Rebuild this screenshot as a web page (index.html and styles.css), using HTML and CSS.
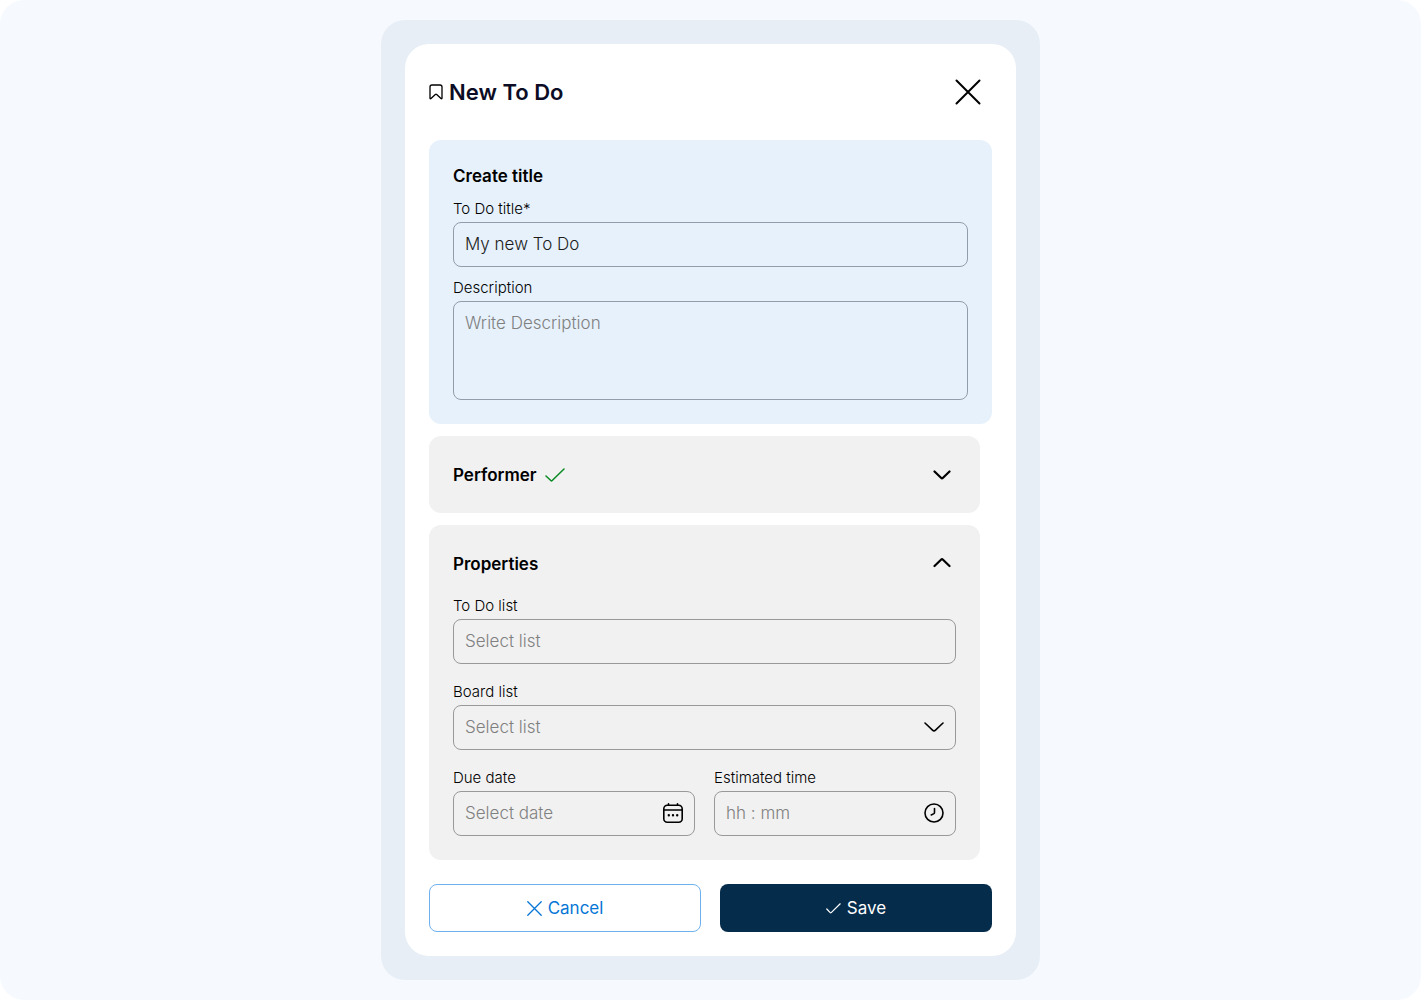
FILE: index.html
```
<!DOCTYPE html>
<html lang="en">
<head>
    <meta charset="UTF-8">
    <meta name="viewport" content="width=device-width, initial-scale=1.0">
    <title>New To Do</title>
    <link rel="stylesheet" href="styles.css">
</head>
<body>
    <div class="page">
        <div class="frame">
            <form class="modal">
                <div class="modal-header">
                    <svg width="14" height="16" viewBox="0 0 14 16" fill="none" stroke="#000" stroke-width="1.3" stroke-linejoin="round">
                        <path d="M3 1h8a2 2 0 0 1 2 2v11.2c0 .5-.6.8-1 .4L7.700 10.600a1 1 0 0 0-1.400 0L2 14.600c-.4.4-1 .1-1-.4V3a2 2 0 0 1 2-2z"/>
                    </svg>
                    <h1>New To Do</h1>
                    <button type="button" class="close-button" aria-label="Close">
                        <svg width="26" height="26" viewBox="0 0 26 26" fill="none" stroke="#000" stroke-width="2" stroke-linecap="round">
                            <path d="M1.500 1.500l23 23M24.500 1.500l-23 23"/>
                        </svg>
                    </button>
                </div>

                <section class="card card-blue">
                    <h2>Create title</h2>
                    <div class="field">
                        <label for="title">To Do title*</label>
                        <input type="text" id="title" value="My new To Do">
                    </div>
                    <div class="field">
                        <label for="description">Description</label>
                        <textarea id="description" placeholder="Write Description"></textarea>
                    </div>
                </section>

                <section class="card card-gray">
                    <div class="card-header">
                        <h2>Performer</h2>
                        <svg width="20" height="14" viewBox="0 0 20 14" fill="none" stroke="#0a8a24" stroke-width="1.5" stroke-linecap="round" stroke-linejoin="round">
                            <path d="M1 8l4.800 4.500a1 1 0 0 0 1.400 0L19 1"/>
                        </svg>
                        <button type="button" class="toggle-button" aria-label="Open Performer">
                            <svg width="18" height="10" viewBox="0 0 18 10" fill="none" stroke="#000" stroke-width="2.200" stroke-linecap="round" stroke-linejoin="round">
                                <path d="M1.500 1.500l6.500 6.300c.6.6 1.400.6 2 0l6.500-6.300"/>
                            </svg>
                        </button>
                    </div>
                </section>

                <section class="card card-gray">
                    <div class="card-header">
                        <h2>Properties</h2>
                        <button type="button" class="toggle-button" aria-label="Close Properties">
                            <svg width="18" height="12" viewBox="0 0 18 12" fill="none" stroke="#000" stroke-width="2.200" stroke-linecap="round" stroke-linejoin="round">
                                <path d="M1.500 8L8 1.700c.6-.6 1.400-.6 2 0L16.500 8"/>
                            </svg>
                        </button>
                    </div>
                    <div class="field">
                        <label for="todo-list">To Do list</label>
                        <input type="text" id="todo-list" placeholder="Select list">
                    </div>
                    <div class="field">
                        <label for="board-list">Board list</label>
                        <div class="control">
                            <select id="board-list">
                                <option value="">Select list</option>
                            </select>
                            <svg class="control-icon" width="20" height="20" viewBox="0 0 20 20" fill="none" stroke="#000" stroke-width="1.600" stroke-linecap="round" stroke-linejoin="round">
                                <path d="M1 6l7.500 7.200c.9.800 2.100.8 3 0L19 6"/>
                            </svg>
                        </div>
                    </div>
                    <div class="field-row">
                        <div class="field">
                            <label for="due-date">Due date</label>
                            <div class="control">
                                <input type="text" id="due-date" placeholder="Select date">
                                <svg class="control-icon" width="20" height="20" viewBox="0 0 20 20" fill="none" stroke="#000" stroke-width="1.600" stroke-linecap="round">
                                    <rect x="0.800" y="2.200" width="18.400" height="17" rx="3.500"/>
                                    <path d="M1 7h18M5.500 .8v1.400M14.500 .8v1.400"/>
                                    <path d="M5.800 12.200h.01M10 12.200h.01M14.200 12.200h.01" stroke-width="2.400"/>
                                </svg>
                            </div>
                        </div>
                        <div class="field">
                            <label for="estimated-time">Estimated time</label>
                            <div class="control">
                                <input type="text" id="estimated-time" placeholder="hh : mm">
                                <svg class="control-icon" width="20" height="20" viewBox="0 0 20 20" fill="none" stroke="#000" stroke-width="1.600" stroke-linecap="round" stroke-linejoin="round">
                                    <circle cx="10" cy="10" r="9"/>
                                    <path d="M10.500 5.500v3.700c0 .6-.2 1.100-.6 1.400L7.200 12"/>
                                </svg>
                            </div>
                        </div>
                    </div>
                </section>

                <div class="modal-footer">
                    <button type="button" class="cancel-button">
                        <svg width="15" height="15" viewBox="0 0 15 15" fill="none" stroke="currentColor" stroke-width="1.300" stroke-linecap="round">
                            <path d="M.8.800l13.400 13.400M14.200.800L.8 14.200"/>
                        </svg>
                        Cancel
                    </button>
                    <button type="submit" class="save-button">
                        <svg width="15" height="11" viewBox="0 0 15 11" fill="none" stroke="currentColor" stroke-width="1.200" stroke-linecap="round" stroke-linejoin="round">
                            <path d="M.8 6l3.400 3.700c.3.300.7.300 1 0L14.200.800"/>
                        </svg>
                        Save
                    </button>
                </div>
            </form>
        </div>
    </div>
</body>
</html>
```
FILE: styles.css
```
* {
    box-sizing: border-box;
}

body {
    margin: 0;
    background-color: #ffffff;
    color: #000;
    font-family: Inter, "Liberation Sans", sans-serif;
}

.page {
    display: flex;
    justify-content: center;
    align-items: flex-start;
    min-height: 100vh;
    padding: 20px;
    background-color: #f6faff;
    border-radius: 24px;
}

.frame {
    width: 100%;
    max-width: 659px;
    padding: 24px;
    background-color: #e7eef6;
    border-radius: 24px;
}

.modal {
    padding: 24px;
    background-color: #ffffff;
    border-radius: 24px;
}

.modal-header {
    display: flex;
    align-items: center;
    gap: 6px;
    margin-bottom: 24px;
}

h1 {
    margin: 0;
    font-size: 22px;
    font-weight: 600;
    line-height: 28px;
    color: #0c0c24;
}

h2 {
    margin: 0;
    font-size: 17px;
    font-weight: 600;
    line-height: 24px;
}

button {
    padding: 0;
    border: none;
    background: none;
    font-family: inherit;
    cursor: pointer;
}

svg {
    display: block;
    flex-shrink: 0;
}

.close-button {
    display: flex;
    align-items: center;
    justify-content: center;
    width: 48px;
    height: 48px;
    margin-left: auto;
}

.card {
    padding: 24px;
    margin-bottom: 12px;
    border-radius: 12px;
}

.card-blue {
    background-color: #e6f1fb;
}

.card-gray {
    margin-right: 12px;
    background-color: #f1f1f1;
}

.card-blue .field {
    margin-top: 12px;
}

.card-gray .field {
    margin-top: 19px;
}

.card-header {
    display: flex;
    align-items: center;
    gap: 8px;
    height: 29px;
}

.toggle-button {
    display: flex;
    align-items: center;
    justify-content: center;
    width: 28px;
    height: 28px;
    margin-left: auto;
}

.field-row {
    display: grid;
    grid-template-columns: 1fr 1fr;
    gap: 19px;
}

label {
    display: block;
    margin-bottom: 4px;
    font-size: 15px;
    font-weight: 300;
    line-height: 18px;
}

input, select, textarea {
    display: block;
    width: 100%;
    height: 45px;
    padding: 0 11px 2px;
    border: 1px solid #999999;
    border-radius: 8px;
    background-color: transparent;
    color: #1c1c1c;
    font-family: inherit;
    font-size: 17px;
    font-weight: 300;
}

.card-blue input, .card-blue textarea {
    border-color: #929dab;
}

textarea {
    height: 99px;
    padding: 10px 11px;
    line-height: 22px;
    resize: none;
}

select {
    appearance: none;
    color: #808080;
}

::placeholder {
    color: #808080;
    opacity: 1;
}

.control {
    position: relative;
}

.control-icon {
    position: absolute;
    top: 12px;
    right: 12px;
    pointer-events: none;
}

.modal-footer {
    display: grid;
    grid-template-columns: 1fr 1fr;
    gap: 19px;
    margin-top: 24px;
}

.modal-footer button {
    display: flex;
    align-items: center;
    justify-content: center;
    gap: 6px;
    height: 48px;
    border-radius: 8px;
    font-size: 17px;
    font-weight: 400;
}

.modal-footer .cancel-button {
    border: 1px solid #6fb1ec;
    color: #0676d6;
}

.modal-footer .save-button {
    background-color: #052c4b;
    color: #ffffff;
}
```
